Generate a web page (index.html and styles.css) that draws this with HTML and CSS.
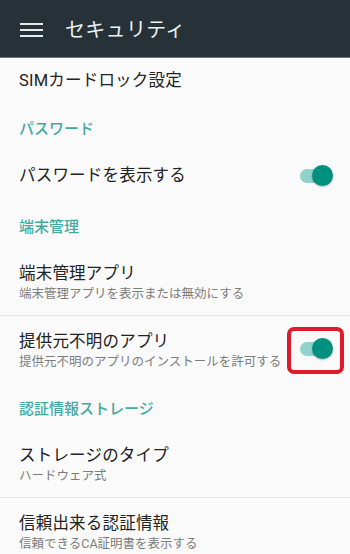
FILE: index.html
```html
<!DOCTYPE html>
<html lang="ja">
<head>
<meta charset="utf-8">
<link rel="stylesheet" href="styles.css">
</head>
<body>
<header class="appbar">
  <svg class="menu" width="24" height="16" viewBox="0 0 24 16">
    <rect x="0" y="1" width="23" height="2" fill="#e6e8e9"/>
    <rect x="0" y="7" width="23" height="2" fill="#e6e8e9"/>
    <rect x="0" y="13" width="23" height="2" fill="#e6e8e9"/>
  </svg>
  <h1 class="title">セキュリティ</h1>
</header>
<main class="list">
  <div class="row row-sim"><span class="label">SIMカードロック設定</span></div>
  <div class="cat cat-pw">パスワード</div>
  <div class="row row-pw">
    <span class="label">パスワードを表示する</span>
    <span class="switch"><span class="track"></span><span class="thumb"></span></span>
  </div>
  <div class="cat cat-dev">端末管理</div>
  <div class="row row-two row-admin divider">
    <div class="text">
      <div class="label">端末管理アプリ</div>
      <div class="sub">端末管理アプリを表示または無効にする</div>
    </div>
  </div>
  <div class="row row-two row-unknown">
    <div class="text">
      <div class="label">提供元不明のアプリ</div>
      <div class="sub">提供元不明のアプリのインストールを許可する</div>
    </div>
    <span class="switch highlighted"><span class="track"></span><span class="thumb"></span></span>
  </div>
  <div class="cat cat-cred">認証情報ストレージ</div>
  <div class="row row-two row-storage divider">
    <div class="text">
      <div class="label">ストレージのタイプ</div>
      <div class="sub">ハードウェア式</div>
    </div>
  </div>
  <div class="row row-two row-trust">
    <div class="text">
      <div class="label">信頼出来る認証情報</div>
      <div class="sub">信頼できるCA証明書を表示する</div>
    </div>
  </div>
</main>
</body>
</html>
```
FILE: styles.css
```css
*, *::before, *::after { box-sizing: border-box; }
html, body { margin: 0; padding: 0; }
body {
  width: 350px;
  height: 554px;
  overflow: hidden;
  background: #fafafa;
  font-family: Roboto, "Noto Sans CJK JP", sans-serif;
  color: #222;
}
.appbar {
  height: 58px;
  background: #263238;
  border-bottom: 1px solid #6c767b;
  display: flex;
  align-items: center;
  padding-left: 20px;
}
.menu { display: block; margin-top: 2px; }
.title {
  margin: 0 0 0 21px;
  font-size: 20px;
  font-weight: 400;
  color: #eef0f1;
  letter-spacing: 0.3px;
}
.list { display: flex; flex-direction: column; }
.row {
  display: flex;
  align-items: center;
  justify-content: space-between;
  padding: 0 17px 0 19px;
}
.label { font-size: 16.5px; line-height: 22px; color: #222; letter-spacing: 0.2px; }
.sub { font-size: 12.5px; line-height: 20px; color: #7c7c7c; margin-top: -1px; }
.cat {
  display: flex;
  align-items: center;
  padding-left: 19px;
  font-size: 15px;
  font-weight: 500;
  color: #44a99f;
}
.row-sim { height: 45px; }
.cat-pw { height: 48px; }
.row-pw { height: 50px; }
.cat-dev { height: 48px; }
.row-admin { height: 67px; padding-top: 2px; }
.row-unknown { height: 70px; }
.cat-cred { height: 42px; }
.row-storage { height: 70px; padding-top: 6px; }
.row-trust { height: 70px; }
.divider { border-bottom: 1px solid #e4e4e4; }

.switch {
  position: relative;
  width: 34px;
  height: 22px;
  flex: none;
}
.track {
  position: absolute;
  left: 1px;
  top: 4px;
  width: 30px;
  height: 14px;
  border-radius: 7px;
  background: #8fd3cb;
}
.thumb {
  position: absolute;
  right: 0;
  top: 0;
  width: 21px;
  height: 21px;
  border-radius: 50%;
  background: #00907f;
  box-shadow: 0 1px 2px rgba(0,0,0,0.25);
}
.highlighted { margin-top: -4px; }
.highlighted::before {
  content: "";
  position: absolute;
  left: -12px;
  top: -11px;
  width: 57px;
  height: 47px;
  border: 4px solid #e01a2a;
  border-radius: 7px;
}
```
